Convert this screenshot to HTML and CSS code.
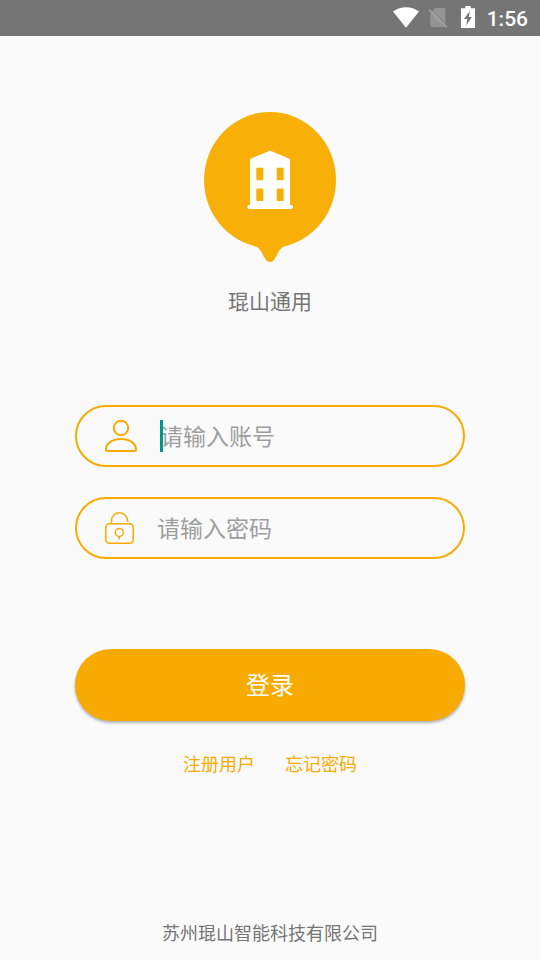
FILE: index.html
```html
<!DOCTYPE html>
<html lang="zh-CN">
<head>
<meta charset="utf-8">
<meta name="viewport" content="width=device-width, initial-scale=1">
<title>琨山通用</title>
<link rel="stylesheet" href="styles.css">
</head>
<body>
<header class="status">
  <svg class="wifi" width="26" height="22" viewBox="0 0 26 22" aria-hidden="true"><path d="M0 4.600C7.600-1.300 18.400-1.300 26 4.600L13 20.800Z" fill="#fff"/></svg>
  <svg class="sim" width="20" height="22" viewBox="0 0 20 22" aria-hidden="true"><path d="M7.500 1H15.500Q17.300 1 17.300 2.800V18Q17.300 20 15.300 20H4.300Q2.300 20 2.300 18V6.200Z" fill="#949494"/><path d="M.9 2.500L18.900 20.500" stroke="#a2a2a2" stroke-width="1.700"/><path d="M3.800 3.200L17.300 16.700" stroke="#858585" stroke-width="1"/></svg>
  <svg class="battery" width="14" height="22" viewBox="0 0 14 22" aria-hidden="true"><path d="M4.300 0H9.700V2.300H14V22H0V2.300H4.300Z" fill="#fff"/><path d="M8.800 5L3 13H6.300L5.300 19.300L11 11H7.800Z" fill="#757575"/></svg>
  <span class="time">1:56</span>
</header>
<main class="login">
  <svg class="logo" width="132" height="150" viewBox="0 0 132 150" aria-hidden="true">
    <ellipse cx="66" cy="68" rx="66" ry="68" fill="#f8af07"/>
    <path d="M50 133.500C57 135 58 143 62 148Q63 150 66 150T70 148C74 143 75 135 82 133.500Z" fill="#f8af07"/>
    <path d="M46 48Q46 47 47 46.500L64.500 39.200Q66 38.500 67.500 39.200L85 46.500Q86 47 86 48V93H87.500Q89 93.300 89 95T87.500 97H45Q43.300 97 43.300 95T45 93H46Z" fill="#fff"/>
    <g fill="#f8af07"><rect x="52.300" y="55.700" width="7" height="12.500" rx="1"/><rect x="72.700" y="55.700" width="7" height="12.500" rx="1"/><rect x="52.300" y="76.600" width="7" height="12.500" rx="1"/><rect x="72.700" y="76.600" width="7" height="12.500" rx="1"/></g>
  </svg>
  <h1 class="title">琨山通用</h1>
  <form class="form">
    <label class="field">
      <svg class="icon" width="32" height="32" viewBox="0 0 32 32" fill="none" stroke="#f7ab00" stroke-width="2" aria-hidden="true"><circle cx="16" cy="8" r="7.200"/><path d="M1 29.500C1 23 7.500 19 16 19S31 23 31 29.500Q31 31 29.500 31H2.500Q1 31 1 29.500Z"/></svg>
      <span class="entry"><input class="input account" type="text" placeholder="请输入账号" aria-label="账号"><span class="caret"></span></span>
    </label>
    <label class="field">
      <svg class="icon" width="29" height="32" viewBox="0 0 29 32" fill="none" stroke="#f7ab00" stroke-width="1.500" aria-hidden="true"><rect x=".8" y="11.800" width="27.400" height="19.400" rx="3.500"/><path d="M6.500 11.500V8.500C6.500 4 10 .8 14.500 .8S22.800 4 22.800 10"/><circle cx="14.300" cy="20.500" r="4"/><path d="M14.300 24V27.500"/></svg>
      <span class="entry"><input class="input" type="password" placeholder="请输入密码" aria-label="密码"></span>
    </label>
    <button class="submit" type="button">登录</button>
  </form>
  <nav class="links"><a href="#register">注册用户</a><a href="#forgot">忘记密码</a></nav>
</main>
<footer class="footer">苏州琨山智能科技有限公司</footer>
</body>
</html>
```

FILE: styles.css
```css
* {
  box-sizing: border-box;
}

body {
  margin: 0;
  min-height: 100vh;
  display: flex;
  flex-direction: column;
  background: #fafafa;
  color: #757575;
  font-family: Roboto, "Noto Sans CJK SC", sans-serif;
}

.status {
  height: 36px;
  padding: 0 12px;
  display: flex;
  justify-content: flex-end;
  align-items: flex-start;
  background: #757575;
  color: #fff;
}

.status svg {
  margin-top: 7px;
}

.status .sim {
  margin-left: 9px;
}

.status .battery {
  margin-top: 6px;
  margin-left: 13px;
}

.time {
  margin-left: 12px;
  font-size: 21px;
  line-height: 38px;
  font-weight: 500;
}

.login {
  flex: 1;
  padding: 76px 75px 0;
  display: flex;
  flex-direction: column;
  align-items: center;
}

.title {
  margin: 24px 0 0;
  font-size: 21px;
  line-height: 32px;
  font-weight: 400;
}

.form {
  width: 100%;
  margin-top: 87px;
  display: flex;
  flex-direction: column;
  gap: 30px;
}

.field {
  height: 62px;
  padding: 0 28px;
  display: flex;
  align-items: center;
  gap: 23px;
  border: 2px solid #f7ab00;
  border-radius: 31px;
}

.icon {
  flex: none;
}

.entry {
  flex: 1;
  min-width: 0;
  position: relative;
  display: flex;
}

.input {
  width: 100%;
  height: 32px;
  padding: 3px 0 0;
  border: 0;
  outline: 0;
  background: none;
  color: #757575;
  font: 23px/28px Roboto, "Noto Sans CJK SC", sans-serif;
}

.input::placeholder {
  color: #9e9e9e;
  opacity: 1;
}

.caret {
  position: absolute;
  left: 0;
  top: 0;
  width: 3px;
  height: 32px;
  background: #009688;
}

.submit {
  height: 72px;
  margin-top: 60px;
  padding: 2px 0 0;
  border: 0;
  border-radius: 36px;
  background: #f7ab00;
  color: #fff;
  font: 24px/36px Roboto, "Noto Sans CJK SC", sans-serif;
  box-shadow: 0 2px 3px rgba(0, 0, 0, 0.3);
}

.links {
  margin-top: 30px;
  display: flex;
  gap: 30px;
  font-size: 18px;
  line-height: 28px;
}

.links a {
  color: #f7ab00;
  text-decoration: none;
}

.footer {
  padding-bottom: 12px;
  font-size: 18px;
  line-height: 28px;
  text-align: center;
}
```
